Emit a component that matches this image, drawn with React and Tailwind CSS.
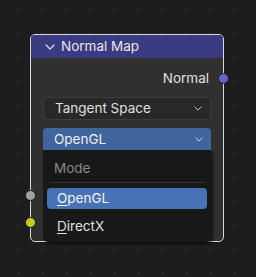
import React from "react";

const Chevron = ({ className }) => (
  <svg viewBox="0 0 10 6" className={className} fill="none">
    <path d="M1 1l4 4 4-4" stroke="currentColor" strokeWidth="1.2" strokeLinecap="round" strokeLinejoin="round" />
  </svg>
);

const Socket = ({ className }) => (
  <div className={`absolute w-[11px] h-[11px] rounded-full border border-[#1a1a1a] ${className}`}></div>
);

const App = () => {
  return (
    <div
      className="relative w-[256px] h-[277px] overflow-hidden bg-[#1d1d1d] pt-[34px] pl-[30px]"
      style={{
        fontFamily: "Inter, 'Noto Sans', sans-serif",
        backgroundImage: "radial-gradient(circle, #2c2c2c 1px, transparent 1.2px)",
        backgroundSize: "24px 24px",
        backgroundPosition: "7px -3px",
      }}
    >
      <div className="relative w-[194px] h-[208px] rounded-[5px] border border-[#d8d8d8] bg-[#303030]">
        <div className="flex items-center gap-[6px] h-[23px] pl-[14px] rounded-t-[4px] bg-[#3b3b82] text-[13.5px] text-[#e8e8e8]">
          <Chevron className="w-[10px] h-[6px] text-[#dcdcdc]" />
          <span>Normal Map</span>
        </div>

        <div className="flex justify-end items-center h-[32px] pr-[14px] pt-[8px] text-[13.5px] text-[#e0e0e0]">
          Normal
        </div>
        <Socket className="right-[-6px] top-[38px] bg-[#6464c8]" />

        <div className="px-[12px] pt-[7px] flex flex-col gap-[8px]">
          <div className="flex items-center justify-between h-[23px] pl-[11px] pr-[8px] rounded-[4px] border border-[#3c3c3c] bg-[#282828] text-[13.5px] text-[#e0e0e0]">
            <span>Tangent Space</span>
            <Chevron className="w-[8px] h-[5px] text-[#d0d0d0]" />
          </div>
          <div className="relative">
            <div className="flex items-center justify-between h-[22px] pl-[11px] pr-[8px] rounded-t-[4px] bg-[#40649c] text-[13.5px] text-[#f0f0f0]">
              <span>OpenGL</span>
              <Chevron className="w-[8px] h-[5px] text-[#e0e0e0]" />
            </div>
            <div className="absolute left-0 top-[22px] w-[168px] h-[92px] rounded-b-[5px] bg-[#181818] shadow-[2px_2px_3px_rgba(0,0,0,0.6)] flex flex-col px-[4px] pt-[6px] text-[13.5px]">
              <div className="h-[24px] pl-[7px] flex items-center text-[#8a8a8a]">Mode</div>
              <div className="mx-[3px] mt-[2px] mb-[5px] h-px bg-[#333333]"></div>
              <div className="h-[21px] pl-[10px] flex items-center rounded-[4px] bg-[#4772b3] text-[#f2f2f2]">
                <span><span className="underline underline-offset-[2px]">O</span>penGL</span>
              </div>
              <div className="mt-[4px] h-[26px] pl-[10px] flex items-center text-[#e0e0e0]">
                <span><span className="underline underline-offset-[2px]">D</span>irectX</span>
              </div>
            </div>
          </div>
        </div>

        <Socket className="left-[-6px] top-[155px] bg-[#a1a1a1]" />
        <Socket className="left-[-6px] top-[182px] bg-[#c7c729]" />
      </div>
    </div>
  );
};

export default App;
